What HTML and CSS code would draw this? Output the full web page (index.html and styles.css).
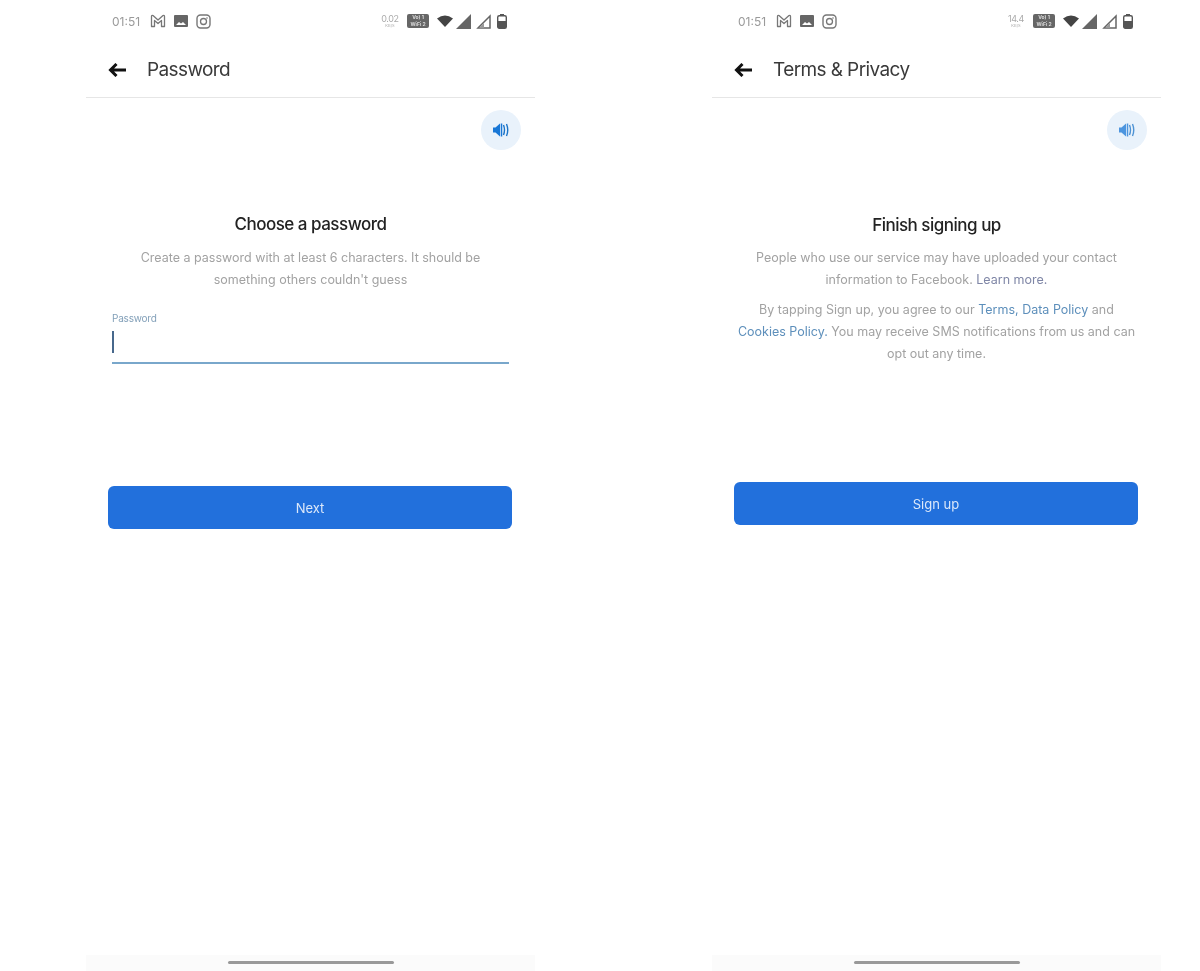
FILE: index.html
```html
<!DOCTYPE html>
<html lang="en">
<head>
<meta charset="utf-8">
<title>Sign up</title>
<link rel="stylesheet" href="styles.css">
</head>
<body>
<svg class="defs" width="0" height="0" aria-hidden="true">
  <symbol id="i-gmail" viewBox="0 0 16 14"><path d="M1.500 12.500V2.500Q1.500 1 3 1.500L8 6l5-4.500q1.500-.5 1.500 1v10h-3V6.500L8 9.500 4.500 6.500v6z" fill="none" stroke="#777" stroke-width="1.300" stroke-linejoin="round"/></symbol>
  <symbol id="i-image" viewBox="0 0 14 12"><rect width="14" height="12" rx="1" fill="#666"/><path d="M2 10l3-3 2 1.500 2-1.500 3 3z" fill="#fff"/></symbol>
  <symbol id="i-insta" viewBox="0 0 15 15"><rect x="1" y="1" width="13" height="13" rx="3.500" fill="none" stroke="#777" stroke-width="1.400"/><circle cx="7.500" cy="7.500" r="3" fill="none" stroke="#777" stroke-width="1.300"/><circle cx="11" cy="4" r=".8" fill="#777"/></symbol>
  <symbol id="i-wifi" viewBox="0 0 16 12"><path d="M0 3.500Q8-2.500 16 3.500L8 12z" fill="#444"/></symbol>
  <symbol id="i-sig-full" viewBox="0 0 15 15"><path d="M15 0v15H0z" fill="#666"/></symbol>
  <symbol id="i-sig-empty" viewBox="0 0 15 15"><path d="M14 2v12H2z" fill="none" stroke="#666" stroke-width="1.500"/><path d="M8 9v5H3z" fill="#999"/></symbol>
  <symbol id="i-batt" viewBox="0 0 10 15"><path d="M3 0h4v2H3z" fill="#555"/><rect x=".7" y="1.700" width="8.600" height="12.600" rx="1.500" fill="none" stroke="#555" stroke-width="1.400"/><rect x="1" y="7" width="8" height="7" fill="#555"/></symbol>
  <symbol id="i-back" viewBox="0 0 18 14"><path d="M18 7H4M8.500 1 2.500 7l6 6" fill="none" stroke="#111" stroke-width="3"/></symbol>
  <symbol id="i-sound" viewBox="0 0 18 16"><path d="M1 5.500h2.500L8 1.500v13l-4.500-4H1z" fill="#1877d6"/><path d="M9.500 1.500v13" stroke="#1877d6" stroke-width="1.500"/><path d="M11.500 3q2 5 0 10M14.500 2q2.500 6 0 12" fill="none" stroke="#1b74c8" stroke-width="1.400"/></symbol>
</svg>

<main class="screens">
  <section class="phone">
    <div class="status">
      <div class="status-left">
        <span class="time">01:51</span>
        <svg class="ic-gmail"><use href="#i-gmail"/></svg>
        <svg class="ic-image"><use href="#i-image"/></svg>
        <svg class="ic-insta"><use href="#i-insta"/></svg>
      </div>
      <div class="status-right">
        <span class="speed"><b>0.02</b><i>KB/S</i></span>
        <span class="volte">Vo) 1<br>WiFi 2</span>
        <svg class="ic-wifi"><use href="#i-wifi"/></svg>
        <svg class="ic-sig"><use href="#i-sig-full"/></svg>
        <svg class="ic-sig"><use href="#i-sig-empty"/></svg>
        <svg class="ic-batt"><use href="#i-batt"/></svg>
      </div>
    </div>
    <header class="nav">
      <svg class="ic-back"><use href="#i-back"/></svg>
      <h1 class="nav-title">Password</h1>
    </header>
    <div class="sound-row"><span class="sound"><svg class="ic-sound"><use href="#i-sound"/></svg></span></div>
    <div class="content">
      <h2 class="title">Choose a password</h2>
      <p class="copy">Create a password with at least 6 characters. It should be something others couldn't guess</p>
      <div class="field">
        <span class="field-label">Password</span>
        <span class="caret"></span>
      </div>
      <button class="primary primary-next">Next</button>
    </div>
    <div class="spacer"></div>
    <div class="home"><span class="home-bar"></span></div>
  </section>

  <section class="phone">
    <div class="status">
      <div class="status-left">
        <span class="time">01:51</span>
        <svg class="ic-gmail"><use href="#i-gmail"/></svg>
        <svg class="ic-image"><use href="#i-image"/></svg>
        <svg class="ic-insta"><use href="#i-insta"/></svg>
      </div>
      <div class="status-right">
        <span class="speed"><b>14.4</b><i>KB/S</i></span>
        <span class="volte">Vo) 1<br>WiFi 2</span>
        <svg class="ic-wifi"><use href="#i-wifi"/></svg>
        <svg class="ic-sig"><use href="#i-sig-full"/></svg>
        <svg class="ic-sig"><use href="#i-sig-empty"/></svg>
        <svg class="ic-batt"><use href="#i-batt"/></svg>
      </div>
    </div>
    <header class="nav">
      <svg class="ic-back"><use href="#i-back"/></svg>
      <h1 class="nav-title">Terms &amp; Privacy</h1>
    </header>
    <div class="sound-row"><span class="sound sound-soft"><svg class="ic-sound"><use href="#i-sound"/></svg></span></div>
    <div class="content">
      <h2 class="title title-signup">Finish signing up</h2>
      <p class="copy">People who use our service may have uploaded your contact information to Facebook. <a class="link-muted">Learn more.</a></p>
      <p class="copy copy-second">By tapping Sign up, you agree to our <a class="link">Terms, Data Policy</a> and <a class="link">Cookies Policy.</a> You may receive SMS notifications from us and can opt out any time.</p>
      <button class="primary primary-signup">Sign up</button>
    </div>
    <div class="spacer"></div>
    <div class="home"><span class="home-bar"></span></div>
  </section>
</main>
</body>
</html>
```
FILE: styles.css
```css
* { box-sizing: border-box; }
html, body { height: 100%; }
body {
  margin: 0;
  background: #fff;
  font-family: Inter, "Liberation Sans", sans-serif;
  overflow: hidden;
}
.defs { position: absolute; }
.screens {
  display: flex;
  gap: 177px;
  height: 971px;
  padding-left: 86px;
  filter: blur(0.4px);
}
.phone {
  width: 449px;
  display: flex;
  flex-direction: column;
  height: 971px;
}
.status {
  height: 44px;
  display: flex;
  justify-content: space-between;
  align-items: center;
  padding: 0 28px 2px 26px;
}
.status-left, .status-right { display: flex; align-items: center; }
.time { font-size: 12px; color: #9a9a9a; width: 38px; letter-spacing: 0; }
.ic-gmail { width: 16px; height: 14px; margin-right: 8px; }
.ic-image { width: 14px; height: 12px; margin-right: 8px; }
.ic-insta { width: 15px; height: 15px; }
.speed { display: flex; flex-direction: column; align-items: center; width: 20px; margin-right: 7px; color: #aaa; }
.speed b { font-weight: 400; font-size: 9px; line-height: 9px; letter-spacing: -0.4px; }
.speed i { font-style: normal; font-size: 4px; line-height: 5px; }
.volte {
  width: 22px;
  height: 14px;
  margin-right: 8px;
  background: #666;
  border-radius: 2px;
  color: #ddd;
  font-size: 5px;
  line-height: 7px;
  font-weight: 700;
  text-align: center;
  white-space: nowrap;
}
.ic-wifi { width: 16px; height: 12px; margin-right: 3px; }
.ic-sig { width: 15px; height: 15px; margin-right: 5px; }
.ic-batt { width: 10px; height: 15px; margin-left: 1px; }
.nav {
  height: 54px;
  display: flex;
  align-items: center;
  gap: 12px;
  padding: 0 0 2px 22px;
  border-bottom: 1px solid #e6e6e6;
}
.ic-back { width: 18px; height: 14px; margin-right: 9px; }
.nav-title { margin: 0; font-size: 19px; font-weight: 400; color: #3a3a3a; letter-spacing: -0.6px; }
.sound-row {
  display: flex;
  justify-content: flex-end;
  padding: 12px 14px 0 0;
}
.sound {
  width: 40px;
  height: 40px;
  border-radius: 50%;
  background: #e9f2fb;
  display: flex;
  align-items: center;
  justify-content: center;
}
.sound-soft .ic-sound { opacity: 0.75; }
.ic-sound { width: 18px; height: 16px; }
.content { padding: 63px 22px 0; text-align: center; }
.title { margin: 0 0 12px; height: 22px; font-size: 17px; line-height: 22px; font-weight: 500; color: #222; letter-spacing: -0.5px; }
.title-signup { margin: 1px 0 11px; }
.copy { margin: 0 auto; width: 375px; font-size: 12.5px; line-height: 22px; color: #a2a2a2; letter-spacing: 0; }
.copy-second { margin-top: 8px; width: 402px; }
.link { color: #5d8fbb; }
.link-muted { color: #7f86a6; }
.field {
  margin: 20px 4px 0;
  height: 53px;
  border-bottom: 2px solid #79a7cb;
  display: flex;
  flex-direction: column;
  align-items: flex-start;
}
.field-label { font-size: 10px; line-height: 14px; color: #83a0b9; letter-spacing: -0.2px; }
.caret { width: 2px; height: 22px; margin-top: 6px; background: #47688c; }
.primary {
  display: block;
  width: 404px;
  height: 43px;
  padding: 0;
  border: 0;
  border-radius: 6px;
  background: #2270dc;
  color: #dce8fa;
  font: 400 13px Inter, "Liberation Sans", sans-serif;
}
.primary-next { margin-top: 122px; }
.primary-signup { margin-top: 117px; }
.spacer { flex: 1; }
.home {
  height: 16px;
  background: #fbfbfb;
  display: flex;
  justify-content: center;
  padding-top: 6px;
}
.home-bar { width: 166px; height: 3px; border-radius: 2px; background: #999; }
```
